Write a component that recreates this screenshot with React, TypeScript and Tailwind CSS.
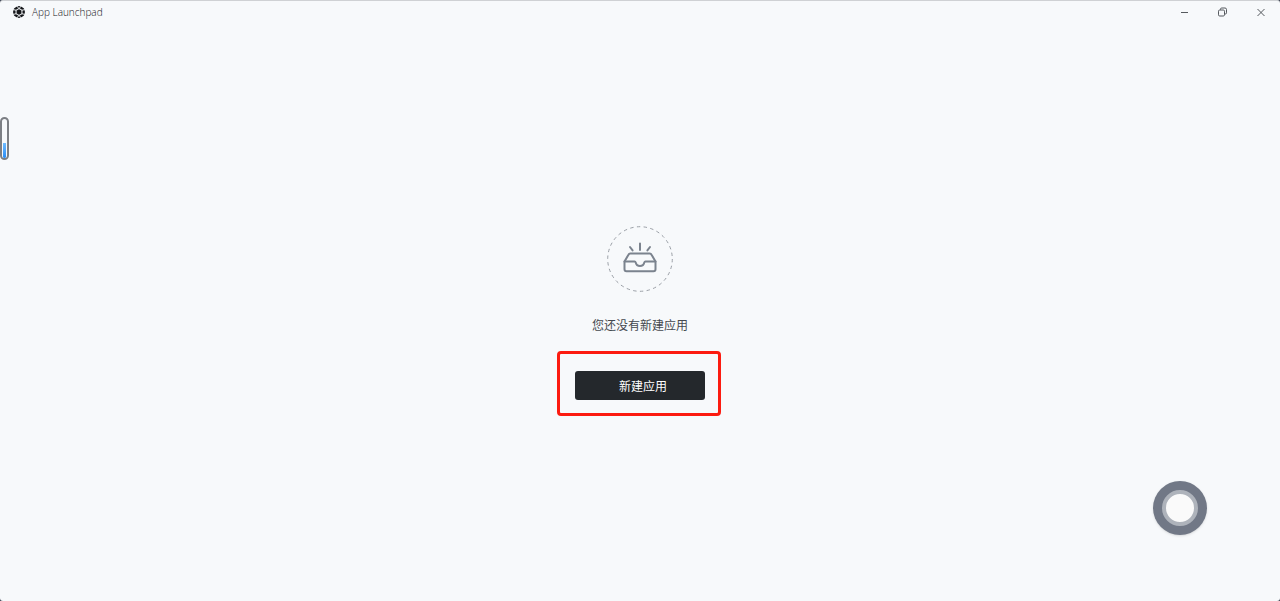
import type { ReactNode } from "react";

function LaunchpadLogo() {
  return (
    <svg viewBox="0 0 24 24" className="size-3" aria-hidden="true">
      <path d="M12 0 17 1.6 22 5 24 12 22 19 17 22.4 12 24 7 22.4 2 19 0 12 2 5 7 1.6Z" fill="#15171a" />
      <path
        d="M12 5.2 17.9 8.6v6.8L12 18.8 6.1 15.4V8.6Z"
        fill="none"
        stroke="#e4e6e8"
        strokeWidth="2.2"
      />
      <path
        d="M12 5.2 7.5 0M12 5.2 16.5 0M17.9 8.6 24 7M17.9 15.4 24 17M12 18.8 7.5 24M12 18.8 16.5 24M6.1 8.6 0 7M6.1 15.4 0 17"
        stroke="#e4e6e8"
        strokeWidth="2"
      />
    </svg>
  );
}

function WindowButton({ label, children }: { label: string; children: ReactNode }) {
  return (
    <button type="button" aria-label={label} className="flex h-full w-[38px] items-center justify-center">
      <svg
        viewBox="0 0 10 10"
        className="size-2.5"
        fill="none"
        stroke="#55595e"
        strokeWidth="1"
        aria-hidden="true"
      >
        {children}
      </svg>
    </button>
  );
}

function TitleBar() {
  return (
    <header className="flex h-[22px] shrink-0 items-center justify-between pl-[13px]">
      <div className="flex items-center gap-[7px]">
        <LaunchpadLogo />
        <h1 className="font-['Open_Sans',sans-serif] text-[10px] leading-4 font-light text-[#15171a]">
          App Launchpad
        </h1>
      </div>
      <div className="flex h-full">
        <WindowButton label="最小化">
          <path d="M1 5.5h7" />
        </WindowButton>
        <WindowButton label="还原">
          <rect x="0.5" y="3" width="6" height="6" rx="1.2" />
          <path d="M2.5 2.8V2.2Q2.5 1 3.7 1H7Q8.5 1 8.5 2.5V5.8Q8.5 7 7.3 7H6.7" />
        </WindowButton>
        <WindowButton label="关闭">
          <path d="m1.5 2 7 7M8.5 2l-7 7" />
        </WindowButton>
      </div>
    </header>
  );
}

function EmptyInbox() {
  return (
    <svg viewBox="0 0 66 66" className="size-[66px]" fill="none" aria-hidden="true">
      <circle cx="33" cy="33" r="32.3" stroke="#9a9fa6" strokeWidth="1" strokeDasharray="3.4 3.365" />
      <g stroke="#7b838e" strokeWidth="2" strokeLinecap="round" strokeLinejoin="round">
        <path d="M33 17.5V24M23 21l2.6 3.4M43 21l-2.6 3.4" />
        <path d="M17.5 35.5 21.3 29Q22 27.6 23.3 27.6H42.7Q44 27.6 44.7 29L48.5 35.5V43.2Q48.5 45.2 46.5 45.2H19.5Q17.5 45.2 17.5 43.2Z" />
        <path d="M17.5 35.5H27.6Q28.4 35.5 28.7 36.5A4.4 4.4 0 0 0 37.3 36.5Q37.6 35.5 38.4 35.5H48.5" />
      </g>
    </svg>
  );
}

export default function App() {
  return (
    <div className="min-h-screen bg-[#3b4252] font-['Noto_Sans','Noto_Sans_CJK_SC',sans-serif]">
      <div className="relative flex min-h-screen flex-col rounded-[3px] border-t border-[#cfd1d4] bg-[#f7f9fb]">
        <TitleBar />

        <main className="flex flex-1 flex-col items-center justify-center pt-0.5">
          <EmptyInbox />
          <p className="mt-[25px] text-[12px] leading-[18px] text-[#44484e]">您还没有新建应用</p>
          <div className="relative mt-9 flex">
            <button
              type="button"
              className="h-[29px] w-[130px] rounded-[3px] bg-[#24282c] pt-0.5 pl-1.5 text-[12px] leading-[18px] text-white"
            >
              新建应用
            </button>
            <div className="pointer-events-none absolute -top-5 -right-4 -bottom-4 -left-[18px] rounded-[4px] border-3 border-[#fc1b10]" />
          </div>
        </main>

        <div
          className="absolute top-[116px] left-0 flex h-[43px] w-[9px] flex-col items-center justify-end rounded-full border-2 border-[#7c7f84] bg-[#f7f9fb]"
          aria-hidden="true"
        >
          <div className="h-[15px] w-[3px] rounded-b-full bg-linear-to-b from-[#6dbbff] to-[#268cf5]" />
        </div>

        <button
          type="button"
          aria-label="快捷菜单"
          className="absolute right-[73px] bottom-[66px] flex size-[54px] items-center justify-center rounded-full bg-[#717886] shadow-sm"
        >
          <span className="size-9 rounded-full border-4 border-[#aeb3bb] bg-[#fafafa]" />
        </button>
      </div>
    </div>
  );
}
